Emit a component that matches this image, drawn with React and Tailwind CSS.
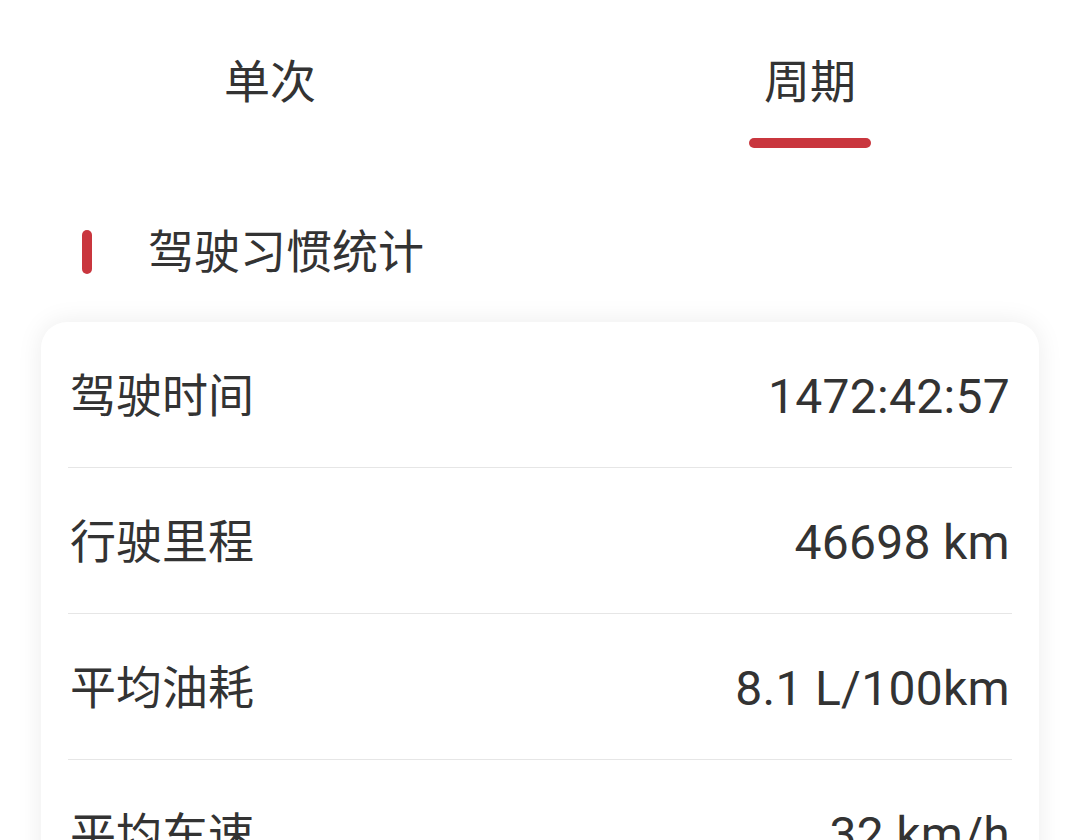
import React, { useState } from 'react';

const cjk = { fontFamily: 'Roboto, "Noto Sans CJK SC", sans-serif' };

const stats = [
  { label: '驾驶时间', value: '1472:42:57' },
  { label: '行驶里程', value: '46698 km' },
  { label: '平均油耗', value: '8.1 L/100km' },
  { label: '平均车速', value: '32 km/h' },
];

export default function App() {
  const [tab, setTab] = useState('period');

  return (
    <div className="min-h-screen bg-white text-[#333333] overflow-hidden" style={cjk}>
      {/* 顶部切换 */}
      <div className="flex pt-[54px]">
        {[
          { key: 'single', name: '单次' },
          { key: 'period', name: '周期' },
        ].map((t) => (
          <button
            key={t.key}
            onClick={() => setTab(t.key)}
            className="flex-1 flex flex-col items-center"
          >
            <span className="text-[46px] leading-[56px]">{t.name}</span>
            <span
              className={`mt-[28px] h-[10px] w-[122px] rounded-full ${
                tab === t.key ? 'bg-[#c9363e]' : 'bg-transparent'
              }`}
            />
          </button>
        ))}
      </div>

      {/* 标题 */}
      <div className="flex items-center mt-[76px] pl-[82px]">
        <span className="w-[10px] h-[44px] rounded-full bg-[#c9363e]" />
        <span className="ml-[56px] text-[46px] leading-[56px]">驾驶习惯统计</span>
      </div>

      {/* 统计卡片 */}
      <div className="mx-[41px] mt-[42px] rounded-[26px] bg-white shadow-[0_0_26px_rgba(0,0,0,0.08)] px-[27px]">
        {stats.map((s, i) => (
          <div
            key={s.label}
            className={`h-[146px] pt-[4px] flex items-center justify-between ${
              i < stats.length - 1 ? 'border-b border-[#e6e6e6]' : ''
            }`}
          >
            <span className="text-[46px] pl-[2px]">{s.label}</span>
            <span className="text-[48px] tracking-[0.3px] pr-[2px]">{s.value}</span>
          </div>
        ))}
      </div>
    </div>
  );
}
